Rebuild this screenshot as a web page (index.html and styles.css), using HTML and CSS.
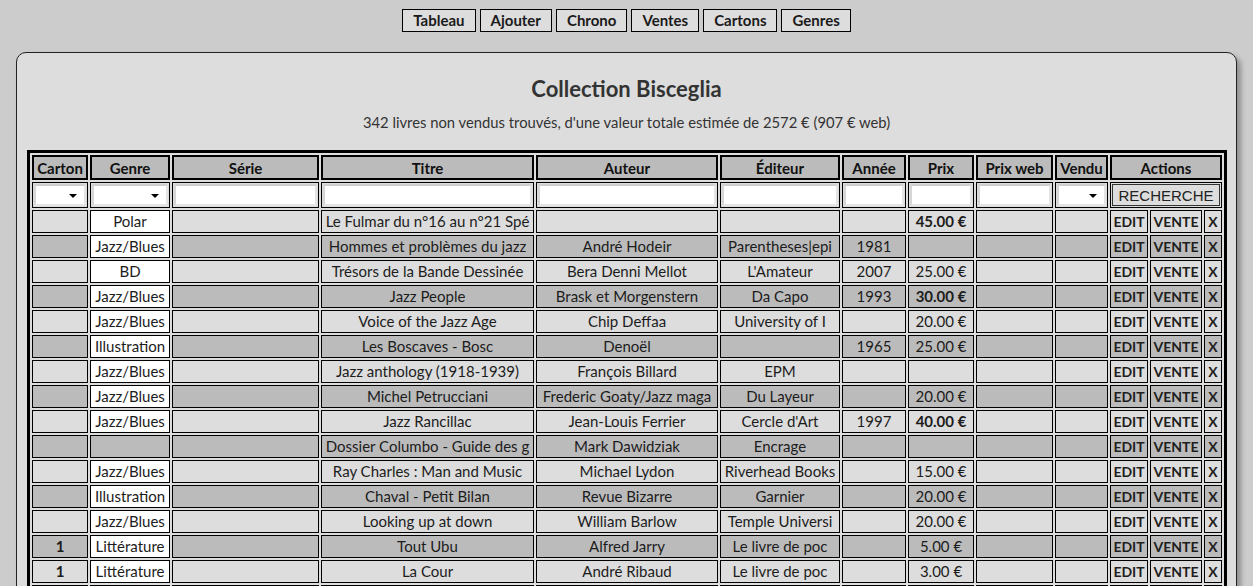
FILE: index.html
```html
<!DOCTYPE html>
<html lang="fr">
<head>
<meta charset="utf-8">
<title>Collection Bisceglia</title>
<link rel="stylesheet" href="styles.css">
</head>
<body>
<nav class="menu">
  <a class="menu-btn" href="#">Tableau</a>
  <a class="menu-btn" href="#">Ajouter</a>
  <a class="menu-btn" href="#">Chrono</a>
  <a class="menu-btn" href="#">Ventes</a>
  <a class="menu-btn" href="#">Cartons</a>
  <a class="menu-btn" href="#">Genres</a>
</nav>
<main class="panel">
  <h1 class="title">Collection Bisceglia</h1>
  <p class="summary">342 livres non vendus trouvés, d'une valeur totale estimée de 2572 € (907 € web)</p>
  <table class="books">
    <colgroup>
      <col class="c-carton"><col class="c-genre"><col class="c-serie"><col class="c-titre"><col class="c-auteur"><col class="c-editeur"><col class="c-annee"><col class="c-prix"><col class="c-web"><col class="c-vendu"><col class="c-edit"><col class="c-vente"><col class="c-x">
    </colgroup>
    <thead>
      <tr class="head">
        <th>Carton</th><th>Genre</th><th>Série</th><th>Titre</th><th>Auteur</th><th>Éditeur</th><th>Année</th><th>Prix</th><th>Prix web</th><th>Vendu</th><th colspan="3">Actions</th>
      </tr>
      <tr class="filters">
        <td><div class="sel"><span class="arrow"></span></div></td>
        <td><div class="sel"><span class="arrow"></span></div></td>
        <td><input class="field" type="text"></td>
        <td><input class="field" type="text"></td>
        <td><input class="field" type="text"></td>
        <td><input class="field" type="text"></td>
        <td><input class="field" type="text"></td>
        <td><input class="field" type="text"></td>
        <td><input class="field" type="text"></td>
        <td><div class="sel"><span class="arrow"></span></div></td>
        <td colspan="3"><button class="search" type="button">RECHERCHE</button></td>
      </tr>
    </thead>
    <tbody>
      <tr class="light"><td></td><td class="genre">Polar</td><td></td><td>Le Fulmar du n°16 au n°21 Spé</td><td></td><td></td><td></td><td class="b">45.00 €</td><td></td><td></td><td class="act">EDIT</td><td class="act">VENTE</td><td class="act">X</td></tr>
      <tr class="dark"><td></td><td class="genre">Jazz/Blues</td><td></td><td>Hommes et problèmes du jazz</td><td>André Hodeir</td><td>Parentheses|epi</td><td>1981</td><td></td><td></td><td></td><td class="act">EDIT</td><td class="act">VENTE</td><td class="act">X</td></tr>
      <tr class="light"><td></td><td class="genre">BD</td><td></td><td>Trésors de la Bande Dessinée</td><td>Bera Denni Mellot</td><td>L'Amateur</td><td>2007</td><td>25.00 €</td><td></td><td></td><td class="act">EDIT</td><td class="act">VENTE</td><td class="act">X</td></tr>
      <tr class="dark"><td></td><td class="genre">Jazz/Blues</td><td></td><td>Jazz People</td><td>Brask et Morgenstern</td><td>Da Capo</td><td>1993</td><td class="b">30.00 €</td><td></td><td></td><td class="act">EDIT</td><td class="act">VENTE</td><td class="act">X</td></tr>
      <tr class="light"><td></td><td class="genre">Jazz/Blues</td><td></td><td>Voice of the Jazz Age</td><td>Chip Deffaa</td><td>University of I</td><td></td><td>20.00 €</td><td></td><td></td><td class="act">EDIT</td><td class="act">VENTE</td><td class="act">X</td></tr>
      <tr class="dark"><td></td><td class="genre">Illustration</td><td></td><td>Les Boscaves - Bosc</td><td>Denoël</td><td></td><td>1965</td><td>25.00 €</td><td></td><td></td><td class="act">EDIT</td><td class="act">VENTE</td><td class="act">X</td></tr>
      <tr class="light"><td></td><td class="genre">Jazz/Blues</td><td></td><td>Jazz anthology (1918-1939)</td><td>François Billard</td><td>EPM</td><td></td><td></td><td></td><td></td><td class="act">EDIT</td><td class="act">VENTE</td><td class="act">X</td></tr>
      <tr class="dark"><td></td><td class="genre">Jazz/Blues</td><td></td><td>Michel Petrucciani</td><td>Frederic Goaty/Jazz maga</td><td>Du Layeur</td><td></td><td>20.00 €</td><td></td><td></td><td class="act">EDIT</td><td class="act">VENTE</td><td class="act">X</td></tr>
      <tr class="light"><td></td><td class="genre">Jazz/Blues</td><td></td><td>Jazz Rancillac</td><td>Jean-Louis Ferrier</td><td>Cercle d'Art</td><td>1997</td><td class="b">40.00 €</td><td></td><td></td><td class="act">EDIT</td><td class="act">VENTE</td><td class="act">X</td></tr>
      <tr class="dark"><td></td><td></td><td></td><td>Dossier Columbo - Guide des g</td><td>Mark Dawidziak</td><td>Encrage</td><td></td><td></td><td></td><td></td><td class="act">EDIT</td><td class="act">VENTE</td><td class="act">X</td></tr>
      <tr class="light"><td></td><td class="genre">Jazz/Blues</td><td></td><td>Ray Charles : Man and Music</td><td>Michael Lydon</td><td>Riverhead Books</td><td></td><td>15.00 €</td><td></td><td></td><td class="act">EDIT</td><td class="act">VENTE</td><td class="act">X</td></tr>
      <tr class="dark"><td></td><td class="genre">Illustration</td><td></td><td>Chaval - Petit Bilan</td><td>Revue Bizarre</td><td>Garnier</td><td></td><td>20.00 €</td><td></td><td></td><td class="act">EDIT</td><td class="act">VENTE</td><td class="act">X</td></tr>
      <tr class="light"><td></td><td class="genre">Jazz/Blues</td><td></td><td>Looking up at down</td><td>William Barlow</td><td>Temple Universi</td><td></td><td>20.00 €</td><td></td><td></td><td class="act">EDIT</td><td class="act">VENTE</td><td class="act">X</td></tr>
      <tr class="dark"><td class="b">1</td><td class="genre">Littérature</td><td></td><td>Tout Ubu</td><td>Alfred Jarry</td><td>Le livre de poc</td><td></td><td>5.00 €</td><td></td><td></td><td class="act">EDIT</td><td class="act">VENTE</td><td class="act">X</td></tr>
      <tr class="light"><td class="b">1</td><td class="genre">Littérature</td><td></td><td>La Cour</td><td>André Ribaud</td><td>Le livre de poc</td><td></td><td>3.00 €</td><td></td><td></td><td class="act">EDIT</td><td class="act">VENTE</td><td class="act">X</td></tr>
      <tr class="dark"><td class="b">1</td><td class="genre">Littérature</td><td></td><td>Ubu roi</td><td>Alfred Jarry</td><td>Gallimard</td><td></td><td>4.00 €</td><td></td><td></td><td class="act">EDIT</td><td class="act">VENTE</td><td class="act">X</td></tr>
    </tbody>
  </table>
</main>
</body>
</html>
```
FILE: styles.css
```css
html, body {
  margin: 0;
  padding: 0;
}
body {
  background: #cccccc;
  font-family: Lato, "Liberation Sans", sans-serif;
  color: #1c1c1c;
}
.menu {
  display: flex;
  justify-content: center;
  gap: 4px;
  padding-top: 9px;
}
.menu-btn {
  display: block;
  box-sizing: border-box;
  height: 23px;
  line-height: 21px;
  padding: 0 10px;
  border: 1px solid #000;
  background: #dddddd;
  color: #1a1a1a;
  font-weight: bold;
  font-size: 15px;
  text-decoration: none;
}
.panel {
  margin: 20px 16px 0;
  background: #dddddd;
  border: 1px solid #222;
  border-radius: 10px;
  box-shadow: 4px 4px 5px #8f8f8f;
  padding: 0 0 40px;
}
.title {
  margin: 23px 0 0;
  font-size: 22px;
  line-height: 26px;
  font-weight: bold;
  text-align: center;
  color: #333;
}
.summary {
  margin: 10px 0 0;
  font-size: 14.8px;
  line-height: 20px;
  text-align: center;
  color: #333;
}
.books {
  margin: 18px 0 0 10px;
  width: 1200px;
  table-layout: fixed;
  border-collapse: separate;
  border-spacing: 2px;
  border: 3px solid #000;
  font-size: 15px;
}
.c-carton { width: 56px; }
.c-genre { width: 80px; }
.c-serie { width: 147px; }
.c-titre { width: 213px; }
.c-auteur { width: 182px; }
.c-editeur { width: 120px; }
.c-annee { width: 64px; }
.c-prix { width: 66px; }
.c-web { width: 77px; }
.c-vendu { width: 53px; }
.c-edit { width: 38px; }
.c-vente { width: 52px; }
.c-x { width: 18px; }
.books th {
  height: 25px;
  box-sizing: border-box;
  padding: 0;
  border: 2px solid #000;
  background: #bbbbbb;
  font-size: 15px;
  font-weight: bold;
  color: #111;
  text-align: center;
}
.books td {
  box-sizing: border-box;
  height: 23px;
  padding: 0 1px;
  border: 1px solid #000;
  text-align: center;
  white-space: nowrap;
  overflow: hidden;
  line-height: 21px;
}
.filters td {
  height: 26px;
  padding: 1px;
  background: #dddddd;
}
.light td { background: #dddddd; }
.dark td { background: #bbbbbb; }
.books td.genre { background: #ffffff; }
.b { font-weight: bold; }
.books td.act {
  font-weight: bold;
  font-size: 14px;
  padding: 0;
  color: #1e1e1e;
}
.field, .sel {
  display: block;
  box-sizing: border-box;
  width: 100%;
  height: 22px;
  margin: 0;
  border: 2px solid #e4e4e4;
  border-top-color: #cfcfcf;
  border-left-color: #d6d6d6;
  background: #ffffff;
  font-family: inherit;
  font-size: 14px;
}
.sel {
  position: relative;
}
.arrow {
  position: absolute;
  right: 7px;
  top: 8px;
  width: 0;
  height: 0;
  border-left: 4px solid transparent;
  border-right: 4px solid transparent;
  border-top: 4px solid #000;
}
.search {
  display: block;
  box-sizing: border-box;
  width: 100%;
  height: 22px;
  margin: 0;
  padding: 0;
  border: 1px solid #333;
  background: #dddddd;
  color: #222;
  font-family: "Liberation Sans", Arial, sans-serif;
  font-size: 15px;
}
```
